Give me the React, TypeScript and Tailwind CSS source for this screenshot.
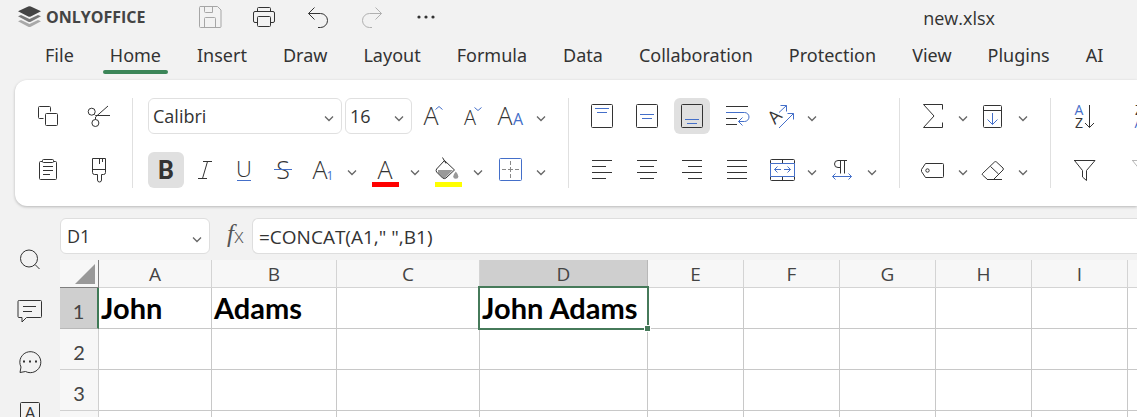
import type { ReactNode } from "react";

const INK = "#333333";
const BLUE = "#446fc9";

const tabs = ["File", "Home", "Insert", "Draw", "Layout", "Formula", "Data", "Collaboration", "Protection", "View", "Plugins", "AI"];

const columns = [
  { name: "A", width: "w-[113px]" },
  { name: "B", width: "w-[125px]" },
  { name: "C", width: "w-[143px]" },
  { name: "D", width: "w-[168px]" },
  { name: "E", width: "w-24" },
  { name: "F", width: "w-24" },
  { name: "G", width: "w-24" },
  { name: "H", width: "w-24" },
  { name: "I", width: "w-24" },
  { name: "J", width: "w-24" }
];

const cells: Record<string, string> = { A1: "John", B1: "Adams", D1: "John Adams" };

const letterFonts = {
  light: "font-['Open_Sans',sans-serif] font-light",
  regular: "font-['Open_Sans',sans-serif] font-normal",
  bold: "font-['Roboto',sans-serif] font-bold"
};

function Icon({ children, stroke = INK }: { children: ReactNode; stroke?: string }) {
  return (
    <svg width="36" height="36" viewBox="0 0 36 36" fill="none" stroke={stroke} aria-hidden="true">
      {children}
    </svg>
  );
}

function Letter({ x, y, size, fill = INK, weight = "light", rotate, children }: { x: number; y: number; size: number; fill?: string; weight?: keyof typeof letterFonts; rotate?: number; children: string }) {
  return (
    <text x={x} y={y} fontSize={size} fill={fill} stroke="none" textAnchor="middle" transform={rotate ? `rotate(${rotate} ${x} ${y})` : undefined} className={letterFonts[weight]}>
      {children}
    </text>
  );
}

function Tool({ label, active, stroke, children }: { label: string; active?: boolean; stroke?: string; children: ReactNode }) {
  return (
    <button type="button" aria-label={label} aria-pressed={active} className={`size-9 shrink-0 rounded-md ${active ? "bg-[#e0e0e0]" : "hover:bg-gray-100"}`}>
      <Icon stroke={stroke}>{children}</Icon>
    </button>
  );
}

function Chevron() {
  return (
    <svg width="18" height="36" viewBox="0 0 18 36" fill="none" stroke="#666666" strokeWidth="1.3" aria-hidden="true">
      <path d="M5 18.5l4 4 4-4" />
    </svg>
  );
}

function SplitTool({ label, children }: { label: string; children: ReactNode }) {
  return (
    <div className="mr-[3px] flex shrink-0 gap-[3px]">
      <Tool label={label}>{children}</Tool>
      <button type="button" aria-label={`${label} options`} className="w-[18px]">
        <Chevron />
      </button>
    </div>
  );
}

function Group({ children }: { children: ReactNode }) {
  return <div className="flex shrink-0 flex-col gap-[18px] border-r border-[#e0e0e0] px-[15px] first:pr-4">{children}</div>;
}

function Combo({ label, value, width }: { label: string; value: string; width: string }) {
  return (
    <div className={`relative h-9 shrink-0 ${width}`}>
      <select aria-label={label} defaultValue={value} className="h-full w-full appearance-none rounded-md border border-[#e0e0e0] bg-white px-1 text-lg text-[#333333]">
        <option>{value}</option>
      </select>
      <span className="pointer-events-none absolute top-0 right-1">
        <Chevron />
      </span>
    </div>
  );
}

function TitleBar() {
  return (
    <header className="flex h-[34px] shrink-0 items-center pl-[18px]">
      <a href="#" className="flex w-[174px] shrink-0 items-center gap-[5px] text-[#444444]">
        <svg width="23" height="22" viewBox="0 0 23 22" aria-hidden="true">
          <path d="M0 15.3l3-1.3 8.5 4 8.5-4 3 1.3-10.2 5.4q-1.3.6-2.6 0z" fill="#a8a8a8" />
          <path d="M0 10.3l3-1.3 8.5 4 8.5-4 3 1.3-10.2 5.4q-1.3.6-2.6 0z" fill="#777777" />
          <path d="M0 5.3L10.2.6q1.3-.6 2.6 0L23 5.3l-10.2 5.2q-1.3.6-2.6 0z" fill="#444444" />
        </svg>
        <span className="text-base leading-none font-bold">ONLYOFFICE</span>
      </a>
      <div className="flex shrink-0 gap-[18px]">
        <Tool label="Save" stroke="#a6a6a6">
          <path d="M8 7.5h17.5l3.5 3.5v16.5a1 1 0 0 1-1 1H8.500a1 1 0 0 1-1-1v-19a1 1 0 0 1 1-1M12.500 7.500v5a1 1 0 0 0 1 1h7v-6M12.500 28.500v-9a1 1 0 0 1 1-1h9a1 1 0 0 1 1 1v9" />
        </Tool>
        <Tool label="Print">
          <path d="M11.5 23.5h-2.5a1.5 1.5 0 0 1-1.5-1.5v-8a1.5 1.5 0 0 1 1.5-1.5h18a1.5 1.5 0 0 1 1.5 1.5v8a1.5 1.5 0 0 1-1.5 1.5h-2.5M11.5 12.5v-3a1 1 0 0 1 1-1h11a1 1 0 0 1 1 1v3" />
          <rect x="11.5" y="17.5" width="13" height="10" rx="1" />
        </Tool>
        <Tool label="Undo">
          <path d="M14.5 8.5l-6 6 6 6M8.5 14.5h12a7 7 0 0 1 0 14h-2.5" />
        </Tool>
        <Tool label="Redo" stroke="#b0b0b0">
          <path d="M21.5 8.5l6 6-6 6M27.5 14.5h-12a7 7 0 0 0 0 14h2.5" />
        </Tool>
        <Tool label="More">
          <g fill={INK} stroke="none">
            <circle cx="11" cy="18" r="1.6" />
            <circle cx="18" cy="18" r="1.6" />
            <circle cx="25" cy="18" r="1.6" />
          </g>
        </Tool>
      </div>
      <h1 className="flex-1 pt-0.5 pr-[142px] text-right text-lg text-[#333333]">new.xlsx</h1>
    </header>
  );
}

function Tabs() {
  return (
    <nav className="flex h-[46px] shrink-0 gap-[22px] pl-[38px] font-['Noto_Sans',sans-serif]">
      {tabs.map((tab) => (
        <a key={tab} href="#" className="flex h-10 shrink-0 flex-col justify-between px-[7px] pt-[7px] text-lg text-[#333333]">
          {tab}
          <span className={`-mx-[7px] h-1 rounded-sm ${tab === "Home" ? "bg-[#3b8558]" : ""}`} />
        </a>
      ))}
    </nav>
  );
}

function SortIcon({ first, second, blueFirst }: { first: string; second: string; blueFirst?: boolean }) {
  return (
    <>
      <Letter x={13} y={17} size={14} weight="regular" fill={blueFirst ? BLUE : INK}>{first}</Letter>
      <Letter x={13} y={30} size={14} weight="regular" fill={blueFirst ? INK : BLUE}>{second}</Letter>
      <path d="M23.5 7v22.5M19 25l4.5 4.5 4.5-4.5" />
    </>
  );
}

function Toolbar() {
  return (
    <section aria-label="Home tools" className="ml-[15px] flex shrink-0 overflow-hidden rounded-l-xl bg-white py-[18px] shadow-[0_1px_3px_rgba(0,0,0,0.25)]">
      <Group>
        <div className="flex gap-[14px]">
          <Tool label="Copy">
            <path d="M13.5 20.5h-4a1 1 0 0 1-1-1v-10a1 1 0 0 1 1-1h10a1 1 0 0 1 1 1v4" />
            <rect x="15.5" y="15.5" width="12" height="12" rx="1" />
          </Tool>
          <Tool label="Cut">
            <circle cx="11.7" cy="13.7" r="3.5" />
            <circle cx="15.4" cy="25" r="3.5" />
            <path d="M14.5 16.5l1 1h14.5M15.5 21.5v-2.5l12.5-11" />
          </Tool>
        </div>
        <div className="flex gap-[14px]">
          <Tool label="Paste">
            <path d="M12.5 9.5h-2a1 1 0 0 0-1 1v16a1 1 0 0 0 1 1h15a1 1 0 0 0 1-1v-16a1 1 0 0 0-1-1h-2M13 14.5h10M13 18.5h10M13 22.5h7" />
            <rect x="12.5" y="7.5" width="11" height="3" rx="1" />
          </Tool>
          <Tool label="Copy style">
            <path d="M12.5 6.5h13v14a2 2 0 0 1-2 2h-2v5.5a2 2 0 0 1-4 0v-5.5h-3a2 2 0 0 1-2-2zM12.5 17.5h13M19.5 7v5M22.5 7v3" />
          </Tool>
        </div>
      </Group>

      <Group>
        <div className="flex gap-[3px]">
          <Combo label="Font" value="Calibri" width="w-[194px]" />
          <Combo label="Font size" value="16" width="w-[67px]" />
          <Tool label="Increase font size">
            <Letter x={16} y={27} size={25}>A</Letter>
            <path d="M20.5 11.5l3.5-3 3.5 3" stroke={BLUE} />
          </Tool>
          <Tool label="Decrease font size">
            <Letter x={16} y={27} size={20}>A</Letter>
            <path d="M20.5 9.5l3.5 3 3.5-3" stroke={BLUE} />
          </Tool>
          <SplitTool label="Change case">
            <Letter x={12} y={27} size={25}>A</Letter>
            <Letter x={25} y={27} size={16} fill={BLUE} weight="regular">A</Letter>
          </SplitTool>
        </div>
        <div className="flex gap-[3px]">
          <Tool label="Bold" active>
            <Letter x={18} y={27} size={25} weight="bold">B</Letter>
          </Tool>
          <Tool label="Italic">
            <path d="M16 9.5h9M11 26.5h9M20.5 9.5l-5 17" />
          </Tool>
          <Tool label="Underline">
            <Letter x={18} y={25} size={22}>U</Letter>
            <path d="M11 28.5h14" stroke={BLUE} />
          </Tool>
          <Tool label="Strikethrough">
            <Letter x={18} y={27} size={25}>S</Letter>
            <path d="M9 17.5h18" stroke={BLUE} />
          </Tool>
          <SplitTool label="Subscript">
            <Letter x={16} y={27} size={25}>A</Letter>
            <Letter x={26} y={28} size={12} fill={BLUE} weight="regular">1</Letter>
          </SplitTool>
          <SplitTool label="Font color">
            <Letter x={18} y={27} size={25}>A</Letter>
            <rect x="5" y="30" width="27" height="5" fill="#ff0000" stroke="none" />
          </SplitTool>
          <SplitTool label="Fill color">
            <path d="M8 18h15l-7.5 7.5q-1.5 1-3 0L8 21z" fill="#999999" stroke="none" />
            <path d="M12.5 5.5l3.5 6M14.5 8.5l10 9.5-8.5 8q-1.7 1.3-3.4 0l-6-6q-1-1.5 0-3z" />
            <path d="M25.8 19.5q2.5 3 2.5 4.7a2.5 2.5 0 0 1-5 0q0-1.7 2.5-4.7z" fill="#999999" stroke="none" />
            <rect x="5" y="30" width="27" height="5" fill="#ffff00" stroke="none" />
          </SplitTool>
          <SplitTool label="Borders">
            <rect x="6.5" y="6.5" width="22" height="22" rx="1" stroke={BLUE} />
            <path d="M9 17.5h4M15 17.5h5M22 17.5h4M17.5 9v4M17.5 15v5M17.5 22v4" stroke="#888888" />
          </SplitTool>
        </div>
      </Group>

      <Group>
        <div className="flex gap-[9px]">
          <Tool label="Align top">
            <rect x="7.5" y="6.5" width="21" height="23" rx="1" />
            <path d="M11 10.5h14M13 14.5h10" stroke={BLUE} />
          </Tool>
          <Tool label="Align middle">
            <rect x="7.5" y="6.5" width="21" height="23" rx="1" />
            <path d="M11 16.5h14M13 20.5h10" stroke={BLUE} />
          </Tool>
          <Tool label="Align bottom" active>
            <rect x="7.5" y="6.5" width="21" height="23" rx="1" />
            <path d="M11 21.5h14M13 25.5h10" stroke={BLUE} />
          </Tool>
          <Tool label="Wrap text">
            <path d="M7 8.5h22M7 20.5h11M7 26.5h11" />
            <path d="M7 14.5h18.5a4.5 4.5 0 0 1 0 9h-6M23.5 19.5l-4 4 4 4" stroke={BLUE} />
          </Tool>
          <SplitTool label="Orientation">
            <Letter x={15} y={23} size={18} weight="regular" rotate={-45}>A</Letter>
            <path d="M15 14.5l7.500-7M16.500 7.500h6v6M15 30l14.500-14.500M23.500 15.500h6v6" stroke={BLUE} />
          </SplitTool>
        </div>
        <div className="flex gap-[9px]">
          <Tool label="Align left">
            <path d="M8 8.5h20M8 14.5h14M8 20.5h20M8 26.5h14" />
          </Tool>
          <Tool label="Align center">
            <path d="M8 8.5h20M11 14.5h14M8 20.5h20M11 26.5h14" />
          </Tool>
          <Tool label="Align right">
            <path d="M8 8.5h20M14 14.5h14M8 20.5h20M14 26.5h14" />
          </Tool>
          <Tool label="Justify">
            <path d="M8 8.5h20M8 14.5h20M8 20.5h20M8 26.5h20" />
          </Tool>
          <div className="flex">
            <SplitTool label="Merge cells">
              <path d="M6.5 11.5v-3a1 1 0 0 1 1-1h22a1 1 0 0 1 1 1v3M6.5 24.5v3a1 1 0 0 0 1 1h22a1 1 0 0 0 1-1v-3M18.5 7.5v4M18.5 24.5v4" />
              <path d="M6.5 11.5h24v13h-24zM17 17.5h-6.5M13.5 14.5l-3 3 3 3M20 17.5h6.5M23.5 14.5l3 3-3 3" stroke={BLUE} />
            </SplitTool>
            <SplitTool label="Text direction">
              <path d="M23 8.5h-9a3.5 3.5 0 0 0 0 7h2.5M16.5 8.5v13M20.5 8.5v13" />
              <path d="M8.5 24.5h19M11.5 21.5l-3 3 3 3M24.5 21.5l3 3-3 3" stroke={BLUE} />
            </SplitTool>
          </div>
        </div>
      </Group>

      <Group>
        <div className="flex">
          <SplitTool label="Summation">
            <path d="M27.5 11.5v-5h-19l10.5 11.5-10.5 11.5h19v-5" />
          </SplitTool>
          <SplitTool label="Fill">
            <rect x="8.5" y="7.5" width="18" height="22" rx="1" />
            <path d="M8.5 12.5h18" />
            <path d="M17.5 15v11.5M12.5 21.5l5 5 5-5" stroke={BLUE} />
          </SplitTool>
        </div>
        <div className="flex">
          <SplitTool label="Named ranges">
            <path d="M10.5 11.5h17a1 1 0 0 1 1 1v12a1 1 0 0 1-1 1h-17l-4-6v-2z" />
            <circle cx="12.5" cy="18.5" r="1.7" />
          </SplitTool>
          <SplitTool label="Clear">
            <path d="M7.5 21.5l12-11.5q1-.8 2 0l6.5 6q.8 1 0 2l-9.5 9.5h-6l-5-4.5q-.6-.7 0-1.5zM15.5 14.5l8 7.5M12 27.5h15" />
          </SplitTool>
        </div>
      </Group>

      <Group>
        <div className="flex gap-6">
          <Tool label="Sort ascending">
            <SortIcon first="A" second="Z" blueFirst />
          </Tool>
          <Tool label="Sort descending">
            <SortIcon first="Z" second="A" />
          </Tool>
        </div>
        <div className="flex gap-6">
          <Tool label="Filter">
            <path d="M8 8.5h21l-8.5 10v10l-4-3.5v-6.5l-8-10" />
          </Tool>
          <Tool label="Clear filter" stroke="#b8b8b8">
            <path d="M6 8.5h21l-8.5 10v10l-4-3.5v-6.5l-8-10" />
          </Tool>
        </div>
      </Group>
    </section>
  );
}

function SideBar() {
  return (
    <aside className="flex w-[60px] shrink-0 flex-col gap-[15px] pt-[35px] pl-3">
      <Tool label="Search">
        <circle cx="17" cy="17.5" r="8.5" />
        <path d="M23 23.5l4.5 4.5" />
      </Tool>
      <Tool label="Comments">
        <path d="M7.5 8.5h21a1 1 0 0 1 1 1v15a1 1 0 0 1-1 1h-14l-4.5 4.5v-4.5h-3a1 1 0 0 1-1-1v-15a1 1 0 0 1 1-1zM11 14.5h13M11 19.5h9" />
      </Tool>
      <Tool label="Chat">
        <path d="M8 29.5l1-5.5a10.5 10.5 0 1 1 4.5 4.5z" />
        <path d="M11 18.500h2M17 18.500h2M23 18.500h2" strokeWidth="2" />
      </Tool>
      <Tool label="Text box">
        <rect x="8.5" y="8.5" width="19" height="20" rx="1" />
        <Letter x={18} y={25} size={17} weight="regular">A</Letter>
      </Tool>
    </aside>
  );
}

function FormulaBar() {
  return (
    <div className="flex h-9 shrink-0">
      <div className="flex w-[150px] shrink-0 rounded-md border border-[#dedede] bg-white">
        <input aria-label="Cell name" defaultValue="D1" className="w-[127px] pl-1.5 text-lg text-[#333333] outline-none" />
        <button type="button" aria-label="Named cells">
          <Chevron />
        </button>
      </div>
      <button type="button" aria-label="Insert function" className="w-[42px] shrink-0 pl-1.5">
        <svg width="36" height="36" viewBox="0 0 36 36" fill="#555555" aria-hidden="true">
          <text x="11" y="24" fontSize="25" className="font-['Liberation_Serif',serif] italic">f</text>
          <text x="18" y="25" fontSize="20" className="font-['Open_Sans',sans-serif] font-light">x</text>
        </svg>
      </button>
      <input aria-label="Formula" defaultValue={'=CONCAT(A1," ",B1)'} className="min-w-0 flex-1 rounded-l-md border border-r-0 border-[#dedede] bg-white pt-0.5 pl-1.5 text-[19px] text-[#333333] outline-none" />
    </div>
  );
}

function Sheet() {
  return (
    <div className="mt-[6px] min-h-0 flex-1 overflow-hidden">
      <table className="w-[1164px] table-fixed border-separate border-spacing-0 bg-white">
        <thead>
          <tr className="h-7 bg-[#f7f7f7]">
            <th className="w-[39px] border-r border-b border-[#7f7f7f] p-0">
              <svg width="38" height="27" viewBox="0 0 38 27" className="block" aria-label="Select all">
                <path d="M15 24L35 4v20z" fill="#999999" />
              </svg>
            </th>
            {columns.map(({ name, width }) => (
              <th key={name} scope="col" className={`border-r border-b p-0 text-[19px] leading-6 font-normal text-[#444444] ${width} ${name === "D" ? "border-[#b8b8b8] bg-[#cfcfcf]" : "border-[#d4d4d4]"}`}>
                {name}
              </th>
            ))}
          </tr>
        </thead>
        <tbody>
          {[1, 2, 3, 4].map((row) => (
            <tr key={row} className="h-[41px]">
              <th scope="row" className={`border-b p-0 pt-1.5 font-['Lato','Open_Sans',sans-serif] text-xl font-normal text-[#444444] ${row === 1 ? "border-r-2 border-r-[#3f7a56] border-b-[#b8b8b8] bg-[#cfcfcf]" : "border-r border-[#d0d0d0] bg-[#f7f7f7]"}`}>
                {row}
              </th>
              {columns.map(({ name }) => {
                const selected = name === "D" && row === 1;
                return (
                  <td key={name} className={`border-r border-b border-[#c8c8c8] p-0 pl-0.5 font-['Lato','Open_Sans',sans-serif] text-[29px] leading-10 font-bold whitespace-nowrap text-black ${selected ? "relative z-10" : ""}`}>
                    {cells[`${name}${row}`]}
                    {selected && (
                      <span className="absolute -inset-[2px] border-2 border-[#467a5a]">
                        <span className="absolute -right-[4px] -bottom-[4px] size-[7px] border border-white bg-[#467a5a]" />
                      </span>
                    )}
                  </td>
                );
              })}
            </tr>
          ))}
        </tbody>
      </table>
    </div>
  );
}

export default function App() {
  return (
    <div className="flex h-screen flex-col overflow-hidden bg-[#f2f2f2] font-['Open_Sans','Noto_Sans',sans-serif]">
      <TitleBar />
      <Tabs />
      <Toolbar />
      <div className="flex min-h-0 flex-1">
        <SideBar />
        <main className="flex min-w-0 flex-1 flex-col pt-3">
          <FormulaBar />
          <Sheet />
        </main>
      </div>
    </div>
  );
}
